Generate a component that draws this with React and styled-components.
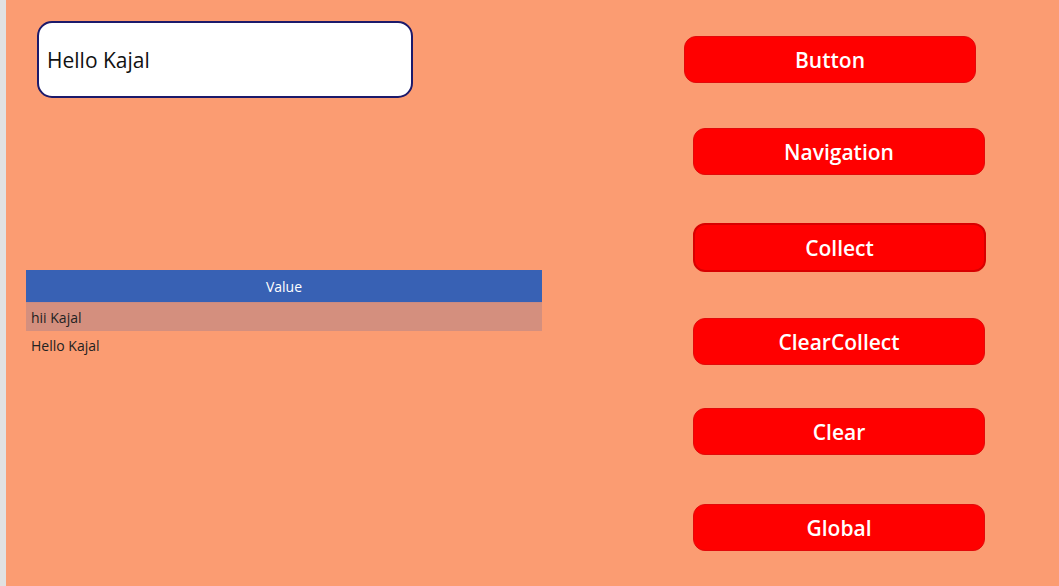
import React from 'react';
import styled, { createGlobalStyle } from 'styled-components';

const GlobalStyle = createGlobalStyle`
  html, body {
    margin: 0;
    padding: 0;
    background: #fb9c72;
    font-family: "Open Sans", "Noto Sans", sans-serif;
  }
`;

const buttons = [
  { label: 'Button', top: 36, left: 0, width: 292 },
  { label: 'Navigation', top: 45, left: 9, width: 292 },
  { label: 'Collect', top: 48, left: 9, width: 293, focused: true },
  { label: 'ClearCollect', top: 46, left: 9, width: 292 },
  { label: 'Clear', top: 43, left: 9, width: 292 },
  { label: 'Global', top: 49, left: 9, width: 292 },
];

const rows = ['hii Kajal', 'Hello Kajal'];

export default function App() {
  return (
    <Screen>
      <GlobalStyle />
      <Strip />
      <LeftColumn>
        <TextInput>Hello Kajal</TextInput>
        <Gallery>
          <Header>Value</Header>
          {rows.map((row, i) => (
            <Row key={row} selected={i === 0}>{row}</Row>
          ))}
        </Gallery>
      </LeftColumn>
      <RightColumn>
        {buttons.map(b => (
          <Button
            key={b.label}
            $top={b.top}
            $left={b.left}
            $width={b.width}
            $focused={b.focused}
          >
            {b.label}
          </Button>
        ))}
      </RightColumn>
    </Screen>
  );
}

const Screen = styled.div`
  display: flex;
  width: 1059px;
  height: 586px;
  overflow: hidden;
  background: #fb9c72;
`;

const Strip = styled.div`
  width: 6px;
  flex-shrink: 0;
  background: #e1e1e1;
`;

const LeftColumn = styled.div`
  display: flex;
  flex-direction: column;
  padding: 21px 0 0 20px;
  width: 516px;
`;

const TextInput = styled.div`
  box-sizing: border-box;
  margin-left: 11px;
  width: 376px;
  height: 77px;
  display: flex;
  align-items: center;
  padding: 0 8px 0;
  background: #ffffff;
  border: 2px solid #1c1a6b;
  border-radius: 15px;
  font-size: 21px;
  color: #111;
`;

const Gallery = styled.div`
  margin-top: 172px;
  width: 516px;
`;

const Header = styled.div`
  height: 32px;
  display: flex;
  align-items: center;
  justify-content: center;
  background: #3861b4;
  color: #fff;
  font-size: 14px;
  border-bottom: 1px solid #c98b82;
`;

const Row = styled.div`
  height: 28px;
  display: flex;
  align-items: center;
  padding-left: 5px;
  font-size: 14px;
  color: #222;
  background: ${p => (p.selected ? '#d48f7e' : 'transparent')};
`;

const RightColumn = styled.div`
  display: flex;
  flex-direction: column;
  align-items: flex-start;
  margin-left: 142px;
`;

const Button = styled.div`
  box-sizing: border-box;
  margin-top: ${p => p.$top}px;
  margin-left: ${p => p.$left}px;
  width: ${p => p.$width}px;
  height: ${p => (p.$focused ? 49 : 47)}px;
  display: flex;
  align-items: center;
  justify-content: center;
  background: #ff0000;
  border: ${p => (p.$focused ? '2px solid #d80000' : '1px solid #e20a0a')};
  border-radius: 12px;
  color: #fff;
  font-size: 21px;
  font-weight: 600;
`;
